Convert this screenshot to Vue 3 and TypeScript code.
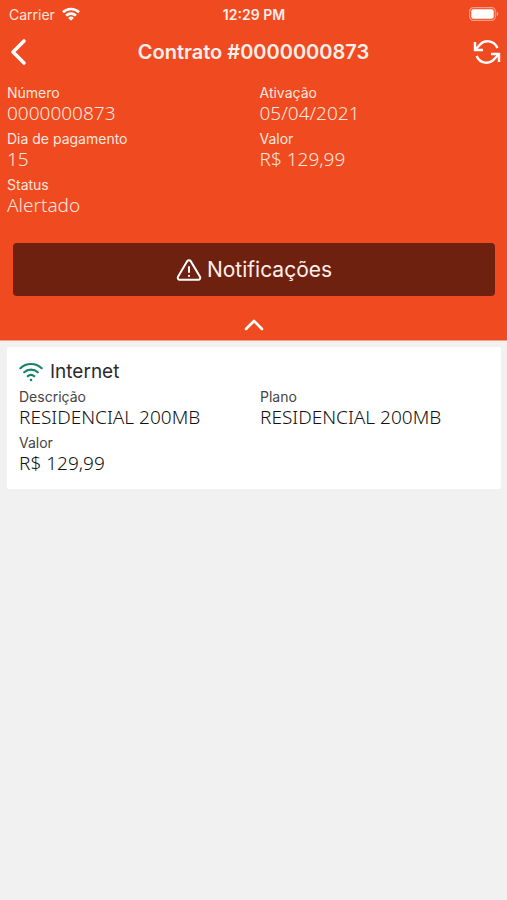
<script setup lang="ts">
interface Field {
  label: string
  value: string
}

const contractFields: Field[] = [
  { label: 'Número', value: '0000000873' },
  { label: 'Ativação', value: '05/04/2021' },
  { label: 'Dia de pagamento', value: '15' },
  { label: 'Valor', value: 'R$ 129,99' },
  { label: 'Status', value: 'Alertado' },
]

const serviceFields: Field[] = [
  { label: 'Descrição', value: 'RESIDENCIAL 200MB' },
  { label: 'Plano', value: 'RESIDENCIAL 200MB' },
  { label: 'Valor', value: 'R$ 129,99' },
]
</script>

<template>
  <div class="screen">
    <header class="header">
      <div class="status-bar">
        <span class="carrier">
          Carrier
          <svg width="18" height="14" viewBox="0 0 18 14" fill="none" stroke="#fff" stroke-width="2.6" aria-hidden="true">
            <path d="M1 5.2a11.5 11.5 0 0 1 16 0" />
            <path d="M4.1 8.6a7 7 0 0 1 9.8 0" />
            <path d="M9 13.8 6.2 10.9a4 4 0 0 1 5.6 0z" fill="#fff" stroke="none" />
          </svg>
        </span>
        <span class="clock">12:29 PM</span>
        <svg class="battery" width="30" height="14" viewBox="0 0 30 14" aria-hidden="true">
          <rect x="0.7" y="0.7" width="25.6" height="12.6" rx="3.6" fill="none" stroke="#fff" stroke-opacity="0.45" stroke-width="1.2" />
          <rect x="2.3" y="2.3" width="22.4" height="9.4" rx="2" fill="#fff" />
          <path d="M27.6 4.8c2.2.6 2.2 3.8 0 4.4z" fill="#fff" fill-opacity="0.5" />
        </svg>
      </div>

      <nav class="nav-bar">
        <button class="icon-button start" type="button" aria-label="Voltar">
          <svg width="18" height="28" viewBox="0 0 18 28" fill="none" stroke="#fff" stroke-width="3.6" stroke-linecap="round" stroke-linejoin="round">
            <path d="M14 3 3 14l11 11" />
          </svg>
        </button>
        <h1 class="title">Contrato #0000000873</h1>
        <button class="icon-button end" type="button" aria-label="Atualizar">
          <svg width="28" height="26" viewBox="0 0 28 26" fill="none" stroke="#fff" stroke-width="2.4" stroke-linejoin="miter">
            <path d="M2 3v8h8" />
            <path d="M2.2 10.8 6.4 6.2C11.6.2 21 1.2 24.4 9" />
            <path d="M26 23v-8h-8" />
            <path d="M25.8 15.2 21.6 19.8C16.4 25.8 7 24.8 3.6 17" />
          </svg>
        </button>
      </nav>

      <dl class="fields">
        <div v-for="field in contractFields" :key="field.label" class="field">
          <dt>{{ field.label }}</dt>
          <dd>{{ field.value }}</dd>
        </div>
      </dl>

      <button class="notifications" type="button">
        <svg width="26" height="24" viewBox="0 0 26 24" fill="none" stroke="#fff" stroke-width="2" stroke-linecap="round" stroke-linejoin="round" aria-hidden="true">
          <path d="M11.3 3.1a2 2 0 0 1 3.4 0l9.3 15.6a2 2 0 0 1-1.7 3H3.7a2 2 0 0 1-1.7-3z" />
          <path d="M13 9v5" />
          <path d="M13 17.8v.2" />
        </svg>
        Notificações
      </button>

      <button class="collapse" type="button" aria-label="Recolher">
        <svg width="20" height="12" viewBox="0 0 20 12" fill="none" stroke="#fff" stroke-width="2.6" stroke-linecap="round" stroke-linejoin="round">
          <path d="m2 10 8-8 8 8" />
        </svg>
      </button>
    </header>

    <main class="content">
      <section class="card">
        <h2 class="card-title">
          <svg width="24" height="20" viewBox="0 0 24 20" fill="none" stroke="#16806a" stroke-width="2.2" stroke-linecap="round" aria-hidden="true">
            <path d="M1.4 6.2C7.4.6 16.6.6 22.6 6.2" />
            <path d="M5.2 10.3c3.9-3.5 9.7-3.5 13.6 0" />
            <path d="M8.8 14.2c1.9-1.6 4.5-1.6 6.4 0" />
            <circle cx="12" cy="18" r="1.3" fill="#16806a" stroke="none" />
          </svg>
          Internet
        </h2>
        <dl class="fields">
          <div v-for="field in serviceFields" :key="field.label" class="field">
            <dt>{{ field.label }}</dt>
            <dd>{{ field.value }}</dd>
          </div>
        </dl>
      </section>
    </main>
  </div>
</template>

<style>
body {
  margin: 0;
  background: #f1f1f1;
}
</style>

<style scoped>
.screen {
  min-height: 100vh;
  background: #f1f1f1;
  color: #2b2b2b;
  font-family: Inter, "Liberation Sans", sans-serif;
}

.header {
  display: flex;
  flex-direction: column;
  background: #f04b20;
  color: #fff;
  border-bottom: 1px solid #f6a08a;
}

.status-bar {
  display: grid;
  grid-template-columns: 1fr auto 1fr;
  align-items: center;
  height: 28px;
  padding: 0 8px 0 9px;
  font-size: 14px;
}

.carrier {
  display: flex;
  align-items: center;
  gap: 7px;
  color: #ffe4dc;
}

.clock {
  font-weight: 600;
  color: #ffeee9;
}

.battery {
  justify-self: end;
}

.nav-bar {
  display: grid;
  grid-template-columns: 1fr auto 1fr;
  align-items: center;
  height: 48px;
  padding: 0 6px;
}

.title {
  margin: 0;
  font-size: 20px;
  font-weight: 600;
  color: #fff0eb;
}

button {
  margin: 0;
  padding: 0;
  border: 0;
  background: none;
  color: inherit;
  font: inherit;
  cursor: pointer;
}

.icon-button {
  display: flex;
}

.icon-button.start {
  justify-self: start;
  padding-left: 4px;
}

.icon-button.end {
  justify-self: end;
}

.fields {
  display: grid;
  grid-template-columns: 1fr 1fr;
  gap: 6px 12px;
  margin: 0;
}

.header .fields {
  padding: 8px 7px 0;
  color: #ffe6de;
}

.field dt {
  font-size: 14px;
  line-height: 18px;
}

.field dd {
  margin: 0;
  font-family: "Noto Sans", "Open Sans", sans-serif;
  font-size: 19px;
  font-weight: 300;
  line-height: 22px;
}

.notifications {
  display: flex;
  align-items: center;
  justify-content: center;
  gap: 5px;
  height: 53px;
  margin: 27px 12px 0 13px;
  border-radius: 4px;
  background: #6f210f;
  color: #fff0eb;
  font-size: 21px;
}

.collapse {
  display: flex;
  align-items: center;
  justify-content: center;
  height: 44px;
  padding-top: 14px;
  box-sizing: border-box;
}

.content {
  padding: 6px 6px 0 7px;
}

.card {
  padding: 12px 12px 15px;
  border-radius: 2px;
  background: #fff;
}

.card-title {
  display: flex;
  align-items: center;
  gap: 7px;
  margin: 0 0 3px;
  font-size: 19px;
  font-weight: 400;
  line-height: 26px;
}

.card dt {
  color: #444;
}

.card dd {
  color: #111;
}
</style>
